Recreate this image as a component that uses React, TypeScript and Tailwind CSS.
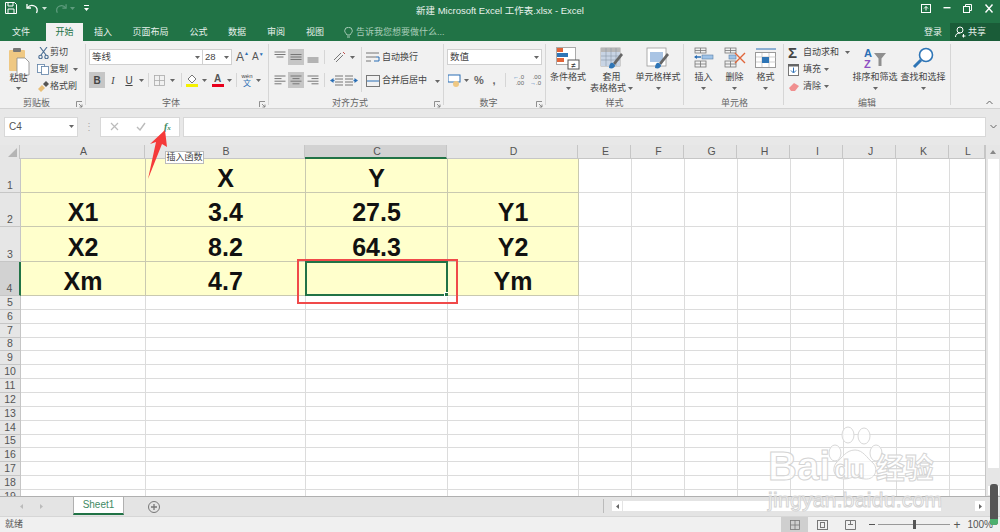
import { FC, ReactNode } from 'react';

const Caret: FC<{ color?: string }> = ({ color = '#666' }) => (
  <svg width="5" height="3" viewBox="0 0 5 3" className="shrink-0"><polygon points="0,0 5,0 2.5,3" fill={color} /></svg>
);

const Launcher: FC = () => (
  <svg width="7" height="7" viewBox="0 0 7 7" fill="none" stroke="#777" strokeWidth="0.8">
    <path d="M0.5 6V0.5H6" /><path d="M3 3L6 6M6 3.5V6H3.5" />
  </svg>
);

const Sep: FC = () => <div className="w-px self-stretch my-[3px] bg-[#d6d6d6] shrink-0" />;

const Group: FC<{ className: string; label: string; launcher?: boolean; children: ReactNode }> = ({ className, label, launcher, children }) => (
  <div className={`flex flex-col shrink-0 pt-[3px] ${className}`}>
    <div className="h-[52px] flex">{children}</div>
    <div className="h-[13px] flex items-end text-[9px] leading-[9px] text-[#666]">
      <span className="flex-1 text-center">{label}</span>
      {launcher && <span className="w-[12px] flex justify-center"><Launcher /></span>}
    </div>
  </div>
);

const Cell: FC<{ className: string; children?: ReactNode }> = ({ className, children }) => (
  <div className={`flex items-center justify-center shrink-0 h-[16px] ${className}`}>{children}</div>
);

const Big: FC<{ className: string; icon: ReactNode; first: string; second?: string; secondCaret?: boolean }> = ({ className, icon, first, second, secondCaret }) => (
  <div className={`flex flex-col items-center shrink-0 text-[9px] text-[#444] leading-[11px] ${className}`}>
    <div className="h-[28px] pt-[3px] flex items-start justify-center">{icon}</div>
    <div className="h-[11px] whitespace-nowrap">{first}</div>
    <div className="h-[11px] flex items-center gap-[2px] whitespace-nowrap">
      {second && <span>{second}</span>}
      {(!second || secondCaret) && <Caret />}
    </div>
  </div>
);

const Lines: FC<{ rows: [number, number][] }> = ({ rows }) => (
  <svg width="12" height="12" viewBox="0 0 12 12" stroke="#777" strokeWidth="1">
    {rows.map(([y, w], i) => <line key={i} x1={(12 - w) / 2} x2={(12 + w) / 2} y1={y} y2={y} />)}
  </svg>
);

const LeftLines: FC<{ align: 'l' | 'c' | 'r' }> = ({ align }) => {
  const ws = [11, 7, 11, 7];
  return (
    <svg width="12" height="10" viewBox="0 0 12 10" stroke="#777" strokeWidth="1">
      {ws.map((w, i) => {
        const x = align === 'l' ? 0.5 : align === 'r' ? 11.5 - w : 6 - w / 2;
        return <line key={i} x1={x} x2={x + w} y1={1 + i * 2.6} y2={1 + i * 2.6} />;
      })}
    </svg>
  );
};

const Indent: FC<{ flip?: boolean }> = ({ flip }) => (
  <svg width="13" height="11" viewBox="0 0 13 11" className={flip ? '-scale-x-100' : ''}>
    <path d="M5 1h8M5 4h8M5 7h8M5 10h8" stroke="#777" strokeWidth="1" />
    <path d="M0 5.5L3.5 3v5z" fill="#2b6fb5" /><rect x="2.5" y="4.8" width="2" height="1.4" fill="#2b6fb5" />
  </svg>
);

const SmallGrid: FC<{ x: number; y: number; w?: number; h?: number; stroke?: string }> = ({ x, y, w = 14, h = 10, stroke = '#777' }) => (
  <g stroke={stroke} strokeWidth="0.8" fill="none">
    <rect x={x} y={y} width={w} height={h} />
    <line x1={x + w / 2} x2={x + w / 2} y1={y} y2={y + h} />
    <line x1={x} x2={x + w} y1={y + h / 2} y2={y + h / 2} />
  </g>
);

const TableBrushIcon: FC<{ single?: boolean }> = ({ single }) => (
  <svg width="24" height="23" viewBox="0 0 24 23">
    <rect x="1" y="1" width="19" height="18" fill="#fff" stroke="#999" strokeWidth="0.8" />
    {single ? (
      <rect x="4" y="5" width="13" height="10" fill="#a9c4e4" />
    ) : (
      <>
        <rect x="1" y="1" width="19" height="4" fill="#b7b7b7" />
        <rect x="1" y="5" width="19" height="14" fill="#c8d4e4" />
        <path d="M1 9h19M1 13h19M6 1v18M11 1v18M16 1v18" stroke="#8b98a8" strokeWidth="0.6" />
      </>
    )}
    <path d="M13 16L21 6l2 2-8 10z" fill="#666" />
    <path d="M9 21c0-4 2-6 4-5l2 2c0 3-3 4-6 3z" fill="#2e75b6" />
  </svg>
);

const Ribbon: FC = () => (
  <div className="h-[68px] bg-[#f1f1f1] border-b border-[#d2d2d2] flex shrink-0 text-[9px] text-[#444]">
    <Group className="w-[85px]" label="剪贴板" launcher>
      <div className="w-[36px] pl-[1px] flex flex-col items-center">
        <svg width="22" height="31" viewBox="0 0 22 31" className="mt-[3px]">
          <rect x="1" y="3" width="16" height="21" rx="1" fill="#efc883" />
          <rect x="5" y="1" width="8" height="4" rx="1" fill="#777" />
          <path d="M9 11h8l4 4v13H9z" fill="#fff" stroke="#888" strokeWidth="0.8" />
        </svg>
        <div className="-mt-[5px] h-[11px] leading-[11px]">粘贴</div>
        <div className="mt-[3px]"><Caret /></div>
      </div>
      <div className="flex flex-col text-[9px]">
        {[
          { t: '剪切', i: <svg width="11" height="12" viewBox="0 0 11 12" fill="none" stroke="#4a6d94" strokeWidth="1.1"><path d="M2 0l6 8M9 0L3 8" /><circle cx="2.5" cy="10" r="1.7" /><circle cx="8.5" cy="10" r="1.7" /></svg> },
          { t: '复制', i: <svg width="12" height="11" viewBox="0 0 12 11" fill="#fff" stroke="#5c7fa6" strokeWidth="0.8"><rect x="0.5" y="0.5" width="7" height="8" /><rect x="4.5" y="2.5" width="7" height="8" /></svg> },
          { t: '格式刷', i: <svg width="12" height="12" viewBox="0 0 12 12"><path d="M1 8l4-4 3 3-4 4z" fill="#e9bf78" /><path d="M6 3l3-3 3 3-3 3z" fill="#555" /></svg> },
        ].map((r, i) => (
          <div key={r.t} className="h-[17px] flex items-center w-[49px]">
            <span className="w-[14px] flex justify-center">{r.i}</span>
            <span>{r.t}</span>
            {i === 1 && <span className="ml-[5px]"><Caret /></span>}
          </div>
        ))}
      </div>
    </Group>
    <Sep />
    <Group className="w-[182px]" label="字体" launcher>
      <div className="pl-[3px] pt-[5px] flex flex-col gap-[7px]">
        <div className="flex items-center h-[16px]">
          <div className="w-[114px] h-[16px] bg-white border border-[#d0d0d0] flex items-center justify-between px-[2px]">
            <span className="text-[9.5px]">等线</span><Caret />
          </div>
          <div className="w-[29px] h-[16px] bg-white border border-[#d0d0d0] border-l-0 flex items-center justify-between px-[2px]">
            <span className="text-[9.5px]">28</span><Caret />
          </div>
          <div className="ml-[4px] w-[15px] flex items-start text-[12px] leading-none text-[#555]">A<span className="text-[#2b6fb5] text-[5px]">▲</span></div>
          <div className="ml-[1px] w-[14px] flex items-start text-[10px] leading-none text-[#555]">A<span className="text-[#2b6fb5] text-[5px]">▼</span></div>
        </div>
        <div className="flex items-center h-[16px]">
          <Cell className="w-[16px] bg-[#c6c6c6] font-bold text-[10px]">B</Cell>
          <Cell className="w-[16px] italic text-[10px] [font-family:'Liberation_Serif',serif]">I</Cell>
          <Cell className="w-[16px] underline text-[10px]">U</Cell>
          <Cell className="w-[8px]"><Caret /></Cell>
          <div className="w-px h-[14px] mx-[3px] bg-[#d6d6d6]" />
          <Cell className="w-[14px]"><svg width="11" height="11"><SmallGrid x={0.5} y={0.5} w={10} h={10} stroke="#aaa" /></svg></Cell>
          <Cell className="w-[13px]"><Caret /></Cell>
          <div className="w-px h-[14px] mx-[2px] bg-[#d6d6d6]" />
          <Cell className="w-[16px]">
            <svg width="12" height="14" viewBox="0 0 12 14"><path d="M2 6l4-4 4 4-4 4z" fill="#fff" stroke="#777" /><rect y="11" width="12" height="3" fill="#f5f100" /></svg>
          </Cell>
          <Cell className="w-[8px]"><Caret /></Cell>
          <Cell className="w-[17px] ml-[1px]">
            <div className="flex flex-col items-center leading-none text-[10px] font-bold text-[#555]">A<div className="w-[12px] h-[3px] bg-[#e8001c]" /></div>
          </Cell>
          <Cell className="w-[7px]"><Caret /></Cell>
          <div className="w-px h-[14px] mx-[3px] bg-[#d6d6d6]" />
          <Cell className="w-[14px]">
            <div className="flex flex-col items-center leading-[7px] text-[6px]"><span>wén</span><span className="text-[#2b6fb5] text-[8px]">文</span></div>
          </Cell>
          <Cell className="w-[8px]"><Caret /></Cell>
        </div>
      </div>
    </Group>
    <Sep />
    <Group className="w-[174px]" label="对齐方式" launcher>
      <div className="w-[92px] pl-[2px] pt-[5px] flex flex-col gap-[7px]">
        <div className="flex items-center h-[16px]">
          <Cell className="w-[17px]"><Lines rows={[[1, 11], [3.5, 11], [6, 7]]} /></Cell>
          <Cell className="w-[16px] bg-[#c6c6c6]"><Lines rows={[[3.5, 11], [6, 11], [8.5, 11]]} /></Cell>
          <Cell className="w-[17px]"><Lines rows={[[7, 11], [9, 11], [11, 11]]} /></Cell>
          <div className="w-px h-[14px] mx-[3px] bg-[#d6d6d6]" />
          <Cell className="w-[22px]"><svg width="13" height="12" viewBox="0 0 13 12" fill="none" stroke="#777"><path d="M1 9L8 2M3 11l7-7" /><path d="M10 1l2 2" stroke="#c0504d" /></svg></Cell>
          <Cell className="w-[5px]"><Caret /></Cell>
        </div>
        <div className="flex items-center h-[16px]">
          <Cell className="w-[17px]"><LeftLines align="l" /></Cell>
          <Cell className="w-[16px] bg-[#c6c6c6]"><LeftLines align="c" /></Cell>
          <Cell className="w-[17px]"><LeftLines align="r" /></Cell>
          <div className="w-px h-[14px] mx-[3px] bg-[#d6d6d6]" />
          <Cell className="w-[16px]"><Indent /></Cell>
          <Cell className="w-[14px]"><Indent flip /></Cell>
        </div>
      </div>
      <div className="w-px my-[3px] bg-[#d6d6d6]" />
      <div className="pl-[4px] pt-[6px] flex flex-col gap-[7px]">
        <div className="h-[16px] flex items-center gap-[2px]">
          <svg width="14" height="12" viewBox="0 0 14 12" fill="none" stroke="#777"><path d="M0 1h13M0 5h10M0 9h5" /><path d="M10 5h3v4H8" stroke="#2b6fb5" /></svg>
          <span>自动换行</span>
        </div>
        <div className="h-[16px] flex items-center gap-[2px]">
          <svg width="14" height="12" viewBox="0 0 14 12" fill="none" stroke="#777"><rect x="0.5" y="0.5" width="13" height="11" /><path d="M1 6h12" stroke="#2b6fb5" /></svg>
          <span>合并后居中</span>
          <span className="ml-[6px]"><Caret /></span>
        </div>
      </div>
    </Group>
    <Sep />
    <Group className="w-[101px]" label="数字" launcher>
      <div className="pl-[3px] pt-[5px] flex flex-col gap-[7px]">
        <div className="w-[95px] h-[16px] bg-white border border-[#d0d0d0] flex items-center justify-between px-[2px]">
          <span className="text-[9.5px]">数值</span><Caret />
        </div>
        <div className="flex items-center h-[16px]">
          <Cell className="w-[15px]">
            <svg width="13" height="13" viewBox="0 0 13 13"><rect y="1" width="12" height="7" fill="#fff" stroke="#2b6fb5" /><circle cx="8" cy="10" r="3" fill="#efc883" /></svg>
          </Cell>
          <Cell className="w-[9px]"><Caret /></Cell>
          <Cell className="w-[16px] text-[11px] font-bold text-[#666]">%</Cell>
          <Cell className="w-[14px] text-[11px] font-bold text-[#666]">,</Cell>
          <div className="w-px h-[14px] mx-[4px] bg-[#d6d6d6]" />
          <Cell className="w-[17px]">
            <div className="text-[6px] leading-[6px] text-[#666] flex flex-col items-end"><span><span className="text-[#2b6fb5]">←</span>.0</span><span>.00</span></div>
          </Cell>
          <Cell className="w-[17px]">
            <div className="text-[6px] leading-[6px] text-[#666] flex flex-col items-end"><span>.00</span><span><span className="text-[#2b6fb5]">→</span>.0</span></div>
          </Cell>
        </div>
      </div>
    </Group>
    <Sep />
    <Group className="w-[137px]" label="样式">
      <Big className="w-[44px]" first="条件格式" icon={
        <svg width="24" height="23" viewBox="0 0 24 23">
          <rect x="0.5" y="0.5" width="19" height="17" fill="#fff" stroke="#aaa" />
          <rect x="1" y="1" width="6" height="4" fill="#e0653a" /><rect x="1" y="6" width="11" height="4" fill="#2e75b6" /><rect x="1" y="11" width="7" height="4" fill="#e0653a" />
          <rect x="12" y="13" width="11" height="9" fill="#fff" stroke="#555" />
          <text x="17.5" y="21" fontSize="8" textAnchor="middle" fill="#333">≠</text>
        </svg>
      } />
      <Big className="w-[43px]" first="套用" second="表格格式" secondCaret icon={<TableBrushIcon />} />
      <Big className="w-[50px]" first="单元格样式" icon={<TableBrushIcon single />} />
    </Group>
    <Sep />
    <Group className="w-[99px] pl-[4px] pr-[2px]" label="单元格">
      <Big className="w-[31px]" first="插入" icon={
        <svg width="20" height="21" viewBox="0 0 20 21"><SmallGrid x={1} y={1} w={11} h={5} /><path d="M1 10h6" stroke="#2b6fb5" strokeWidth="1.5" /><path d="M0 10l3-2v4z" fill="#2b6fb5" /><rect x="8" y="8" width="11" height="4" fill="#9fc3e8" stroke="#5c7fa6" strokeWidth="0.6" /><SmallGrid x={1} y={14} w={11} h={6} /></svg>
      } />
      <Big className="w-[31px]" first="删除" icon={
        <svg width="22" height="21" viewBox="0 0 22 21"><SmallGrid x={1} y={1} w={11} h={5} /><rect x="5" y="8" width="7" height="4" fill="#9fc3e8" stroke="#5c7fa6" strokeWidth="0.6" /><SmallGrid x={1} y={14} w={11} h={6} /><path d="M11 6l10 10M21 6L11 16" stroke="#e0653a" strokeWidth="1.4" /></svg>
      } />
      <Big className="w-[31px]" first="格式" icon={
        <svg width="22" height="22" viewBox="0 0 22 22"><path d="M1 2h20" stroke="#2b6fb5" /><rect x="0.5" y="5.5" width="20" height="15" fill="#fff" stroke="#999" /><path d="M7 6v14M14 6v14M1 10h20M1 15h20" stroke="#bbb" strokeWidth="0.7" /><rect x="7" y="10" width="7" height="6" fill="#2e75b6" /></svg>
      } />
    </Group>
    <Sep />
    <Group className="w-[166px]" label="编辑">
      <div className="w-[67px] pl-[4px] flex flex-col">
        <div className="h-[17px] flex items-center">
          <span className="w-[15px] text-[15px] leading-none text-[#444] font-bold">Σ</span><span>自动求和</span><span className="ml-[6px]"><Caret /></span>
        </div>
        <div className="h-[17px] flex items-center">
          <span className="w-[15px]"><svg width="11" height="12" viewBox="0 0 11 12"><rect x="0.5" y="0.5" width="10" height="11" fill="#fff" stroke="#777" /><rect width="11" height="2.5" fill="#666" /><path d="M5.5 3.5v5M3 6.5l2.5 2.5L8 6.5" stroke="#2b6fb5" fill="none" /></svg></span><span>填充</span><span className="ml-[3px]"><Caret /></span>
        </div>
        <div className="h-[17px] flex items-center">
          <span className="w-[15px]"><svg width="12" height="10" viewBox="0 0 12 10"><path d="M1 6l5-5 5 3-4 5H3z" fill="#f08f8f" /></svg></span><span>清除</span><span className="ml-[3px]"><Caret /></span>
        </div>
      </div>
      <Big className="w-[48px]" first="排序和筛选" icon={
        <svg width="24" height="22" viewBox="0 0 24 22">
          <text x="1" y="10" fontSize="11" fontWeight="bold" fill="#2b6fb5">A</text>
          <text x="1" y="21" fontSize="11" fontWeight="bold" fill="#8e4fc2">Z</text>
          <path d="M11 6h12l-4.5 5.5V19h-3v-7.5z" fill="#8f8f8f" />
        </svg>
      } />
      <Big className="w-[48px]" first="查找和选择" icon={
        <svg width="23" height="22" viewBox="0 0 23 22" fill="none"><circle cx="14" cy="8" r="6.5" stroke="#2e75b6" strokeWidth="1.6" fill="#fff" /><path d="M9 13l-7 7" stroke="#2e75b6" strokeWidth="3" /></svg>
      } />
    </Group>
    <Sep />
    <div className="flex-1 flex justify-end items-end pr-[7px] pb-[3px]">
      <svg width="7" height="5" viewBox="0 0 7 5" fill="none" stroke="#666"><path d="M0.5 4L3.5 1l3 3" /></svg>
    </div>
  </div>
);

const tabs: { label: string; className: string }[] = [
  { label: '插入', className: 'w-[40px]' },
  { label: '页面布局', className: 'w-[55px]' },
  { label: '公式', className: 'w-[41px]' },
  { label: '数据', className: 'w-[36px]' },
  { label: '审阅', className: 'w-[42px]' },
  { label: '视图', className: 'w-[36px]' },
];

const TitleBar: FC = () => (
  <div className="h-[41px] bg-[#217346] flex flex-col shrink-0 text-white">
    <div className="h-[23px] grid grid-cols-[1fr_auto_1fr] items-center">
      <div className="flex items-center pl-[5px] -mt-[7px]">
        <svg width="12" height="12" viewBox="0 0 12 12" fill="none" stroke="#fff"><path d="M0.5 0.5h9l2 2v9H0.5z" /><path d="M3 1v3h5V1M3 11V7h6v4" /></svg>
        <svg width="13" height="11" viewBox="0 0 13 11" fill="none" stroke="#fff" strokeWidth="1.3" className="ml-[9px]"><path d="M1 1v4h4" /><path d="M1.5 5C3 2.5 6 2 8.5 3s3.5 4 2 7" /></svg>
        <span className="ml-[3px]"><Caret color="#cfe3d8" /></span>
        <svg width="12" height="11" viewBox="0 0 13 11" fill="none" stroke="#5f9c7e" strokeWidth="1.3" className="ml-[8px] -scale-x-100"><path d="M1 1v4h4" /><path d="M1.5 5C3 2.5 6 2 8.5 3s3.5 4 2 7" /></svg>
        <span className="ml-[3px]"><Caret color="#5f9c7e" /></span>
        <svg width="5" height="6" viewBox="0 0 5 6" className="ml-[9px]"><path d="M0 0h5v1H0z" fill="#fff" /><polygon points="0,3 5,3 2.5,6" fill="#fff" /></svg>
      </div>
      <div className="text-[9.5px] whitespace-nowrap -mt-[1px] text-[#e8f1ec]">新建 Microsoft Excel 工作表.xlsx - Excel</div>
      <div className="flex justify-end items-center -mt-[7px] pr-[6px] gap-[11px]">
        <svg width="10" height="9" viewBox="0 0 10 9" fill="none" stroke="#fff"><rect x="0.5" y="0.5" width="9" height="8" /><path d="M5 2.5v4M3 4.5l2-2 2 2" /></svg>
        <svg width="10" height="2" viewBox="0 0 10 2"><rect width="7" height="1.4" x="1.5" fill="#fff" /></svg>
        <svg width="10" height="9" viewBox="0 0 10 9" fill="none" stroke="#fff"><rect x="0.5" y="2.5" width="6" height="6" /><path d="M2.5 2.5v-2h6v6H6.500" /></svg>
        <svg width="10" height="9" viewBox="0 0 10 9" fill="none" stroke="#fff" strokeWidth="1.4"><path d="M1.5 0.500l7 8M8.500 0.500l-7 8" /></svg>
      </div>
    </div>
    <div className="h-[18px] flex items-stretch text-[9px] text-[#e8f1ec] leading-[18px] text-center">
      <div className="w-[42px]">文件</div>
      <div className="w-[37px] ml-[4px] bg-[#f1f1f1] text-[#217346]">开始</div>
      {tabs.map(t => <div key={t.label} className={t.className}>{t.label}</div>)}
      <div className="ml-[11px] flex items-center gap-[3px] text-[#a9cdb9]">
        <svg width="9" height="11" viewBox="0 0 9 11" fill="none" stroke="#a9cdb9"><path d="M3 8C2 6 0.700 5.500 0.700 3.700a3.800 3.400 0 017.600 0C8.300 5.500 7 6 6 8z" /><path d="M3 10h3" /></svg>
        <span>告诉我您想要做什么...</span>
      </div>
      <div className="flex-1 flex justify-end items-center">
        <span className="mr-[8px]">登录</span>
        <div className="w-[50px] h-[18px] bg-[#1a5c38] flex items-center pl-[5px] gap-[2px]">
          <svg width="11" height="12" viewBox="0 0 11 12" fill="none" stroke="#fff"><circle cx="5" cy="4" r="3" /><path d="M0.500 11c0-2.500 1.500-4 4.500-4M8.500 8v3.500M7 10h3.500" /></svg>
          <span>共享</span>
        </div>
      </div>
    </div>
  </div>
);

const FormulaBar: FC = () => (
  <div className="h-[36px] bg-[#e8e8e8] shrink-0 flex items-center pl-[4px] pb-[1px] text-[10px] text-[#555]">
    <div className="w-[74px] h-[20px] bg-white border border-[#d8d8d8] flex items-center justify-between pl-[4px] pr-[3px]">
      <span>C4</span><Caret />
    </div>
    <div className="w-[22px] flex justify-center text-[#aaa] text-[10px]">⋮</div>
    <div className="w-[80px] h-[20px] bg-white border border-[#d8d8d8] flex items-center pl-[9px]">
      <svg width="9" height="9" viewBox="0 0 9 9" stroke="#bbb" strokeWidth="1.2"><path d="M1 1l7 7M8 1L1 8" /></svg>
      <svg width="10" height="9" viewBox="0 0 10 9" stroke="#bbb" strokeWidth="1.4" fill="none" className="ml-[17px]"><path d="M1 5l3 3 5-7" /></svg>
      <span className="ml-[18px] italic font-bold text-[10px] text-[#3b8a60] [font-family:'Liberation_Serif',serif]">f<span className="text-[7px]">x</span></span>
    </div>
    <div className="ml-[3px] w-[803px] h-[20px] bg-white border border-[#d8d8d8]" />
    <div className="flex-1 flex justify-center"><svg width="7" height="5" viewBox="0 0 7 5" fill="none" stroke="#666"><path d="M0.500 1l3 3 3-3" /></svg></div>
  </div>
);

const colHeaders: { label: string; className: string }[] = [
  { label: 'A', className: 'w-[125px]' },
  { label: 'B', className: 'w-[160px]' },
  { label: 'C', className: 'w-[142px]' },
  { label: 'D', className: 'w-[131px]' },
  { label: 'E', className: 'w-[53px]' },
  { label: 'F', className: 'w-[53px]' },
  { label: 'G', className: 'w-[53px]' },
  { label: 'H', className: 'w-[53px]' },
  { label: 'I', className: 'w-[53px]' },
  { label: 'J', className: 'w-[53px]' },
  { label: 'K', className: 'w-[53px]' },
  { label: 'L', className: 'w-[36px]' },
];

const dataRows: { n: number; h: string; cells: string[] }[] = [
  { n: 1, h: 'h-[34px]', cells: ['', 'X', 'Y', ''] },
  { n: 2, h: 'h-[34px]', cells: ['X1', '3.4', '27.5', 'Y1'] },
  { n: 3, h: 'h-[35px]', cells: ['X2', '8.2', '64.3', 'Y2'] },
  { n: 4, h: 'h-[34px]', cells: ['Xm', '4.7', '', 'Ym'] },
];

const emptyRows = Array.from({ length: 15 }, (_, i) => i + 5);

const RowNum: FC<{ n: number; className: string }> = ({ n, className }) => (
  <div className={`w-[21px] shrink-0 flex items-end justify-center text-[10.5px] leading-[13px] text-[#555] border-r border-b ${n === 4 ? 'bg-[#d2d2d2] border-r-2 border-r-[#217346] border-b-[#c6c6c6]' : 'bg-[#e6e6e6] border-[#c6c6c6]'} ${className}`}>{n}</div>
);

const Sheet: FC = () => (
  <div className="h-[351px] flex shrink-0 overflow-hidden bg-white relative">
    <div className="w-[985px] shrink-0 flex flex-col">
      <div className="h-[14px] flex bg-[#e6e6e6] text-[10.5px] text-[#555] shrink-0">
        <div className="w-[21px] border-r border-[#c6c6c6] flex items-end justify-end pr-[2px] pb-[2px]">
          <svg width="9" height="9" viewBox="0 0 9 9"><polygon points="9,0 9,9 0,9" fill="#b5b5b5" /></svg>
        </div>
        {colHeaders.map(c => (
          <div key={c.label} className={`${c.className} shrink-0 text-center pl-[3px] leading-[13px] border-r border-[#c6c6c6] ${c.label === 'C' ? 'bg-[#d2d2d2] border-b-2 border-b-[#217346]' : 'border-b border-b-[#c6c6c6]'}`}>{c.label}</div>
        ))}
      </div>
      {dataRows.map(r => (
        <div key={r.n} className={`${r.h} flex shrink-0`}>
          <RowNum n={r.n} className={r.h} />
          {r.cells.map((c, i) => {
            const selected = r.n === 4 && i === 2;
            return (
              <div key={i} className={`${colHeaders[i].className} shrink-0 bg-[#ffffcc] border-r border-b border-[#c9c9b0] flex items-end justify-center text-[25px] leading-[28px] font-bold text-[#111] relative`}>
                {c}
                {selected && (
                  <div className="absolute -left-px -top-px -right-px -bottom-px border-2 border-[#217346]">
                    <div className="absolute -right-[3px] -bottom-[3px] w-[5px] h-[5px] bg-[#217346] border border-white" />
                  </div>
                )}
              </div>
            );
          })}
          {colHeaders.slice(4).map(c => <div key={c.label} className={`${c.className} shrink-0 border-r border-b border-[#dcdcdc]`} />)}
        </div>
      ))}
      {emptyRows.map(n => (
        <div key={n} className="h-[13.86px] flex shrink-0">
          <RowNum n={n} className="h-[13.86px]" />
          {colHeaders.map(c => <div key={c.label} className={`${c.className} shrink-0 border-r border-b border-[#dcdcdc]`} />)}
        </div>
      ))}
    </div>
    <div className="flex-1 bg-[#e6e6e6] flex flex-col items-center border-l border-[#c6c6c6]">
      <div className="h-[14px] w-full flex items-center justify-center"><svg width="6" height="4"><polygon points="0,4 6,4 3,0" fill="#888" /></svg></div>
      <div className="w-[11px] h-[309px] bg-white" />
      <div className="flex-1" />
      <div className="w-[11px] h-[9px] bg-white flex items-center justify-center mb-[1px]"><Caret /></div>
    </div>
  </div>
);

const SheetTabs: FC = () => (
  <div className="h-[20px] bg-[#e4e4e4] border-t border-[#b0b0b0] flex shrink-0 text-[10px]">
    <div className="w-[73px] flex items-center pl-[20px] gap-[17px]">
      <svg width="3" height="5"><polygon points="3,0 3,5 0,2.500" fill="#bbb" /></svg>
      <svg width="3" height="5"><polygon points="0,0 0,5 3,2.500" fill="#bbb" /></svg>
    </div>
    <div className="w-[51px] h-[18px] bg-white border-x border-[#b0b0b0] border-b-2 border-b-[#217346] text-[#3f8a63] text-center leading-[16px]">Sheet1</div>
    <div className="w-[59px] flex items-center justify-center">
      <svg width="12" height="12" viewBox="0 0 12 12" fill="none" stroke="#777"><circle cx="6" cy="6" r="5.500" /><path d="M3 6h6M6 3v6" strokeWidth="1.300" /></svg>
    </div>
    <div className="flex-1" />
    <div className="w-px h-[14px] mt-[2px] bg-[#bbb] mr-[8px]" />
    <div className="w-[373px] h-[16px] flex items-center mt-[1px]">
      <div className="w-[10px] h-[10px] bg-white flex items-center justify-center"><svg width="3" height="5"><polygon points="3,0 3,5 0,2.500" fill="#666" /></svg></div>
      <div className="ml-[1px] w-[318px] h-[10px] bg-white" />
      <div className="flex-1" />
      <div className="w-[10px] h-[10px] bg-white flex items-center justify-center"><svg width="3" height="5"><polygon points="0,0 0,5 3,2.500" fill="#666" /></svg></div>
    </div>
    <div className="w-[15px]" />
  </div>
);

const StatusBar: FC = () => (
  <div className="h-[16px] bg-[#f0f0f0] flex items-center shrink-0 text-[9px] text-[#555] border-t border-[#d6d6d6]">
    <span className="ml-[5px]">就绪</span>
    <div className="flex-1" />
    <div className="w-[27px] h-[16px] bg-[#cfcfcf] flex items-center justify-center">
      <svg width="10" height="10"><SmallGrid x={0.5} y={0.5} w={9} h={9} /></svg>
    </div>
    <div className="w-[28px] flex justify-center"><svg width="11" height="10" fill="none" stroke="#777"><rect x="0.500" y="0.500" width="10" height="9" /><rect x="3.500" y="2.500" width="4" height="5" /></svg></div>
    <div className="w-[28px] flex justify-center"><svg width="11" height="10" fill="none" stroke="#777"><path d="M0.500 0.500h10v9h-10zM5.500 0.500v4M3 4.500h5" /></svg></div>
    <div className="ml-[5px] w-[6px] h-px bg-[#555]" />
    <div className="ml-[3px] w-[72px] h-px bg-[#999] relative">
      <div className="absolute left-[35px] -top-[4px] w-[3px] h-[9px] bg-[#555]" />
    </div>
    <span className="ml-[3px] text-[12px] leading-none">+</span>
    <span className="ml-[7px] mr-[7px] text-[10px]">100%</span>
  </div>
);

const Overlays: FC = () => (
  <>
    <svg width="30" height="56" viewBox="0 0 30 56" className="absolute left-[143px] top-[127px]">
      <polygon points="22,3 24,20 19,17 5,52 13,15 7,17" fill="#f53a3a" />
    </svg>
    <div className="absolute left-[165px] top-[151px] w-[39px] h-[13px] bg-white border border-[#bbb] text-[9px] leading-[11px] text-center text-[#444] whitespace-nowrap">插入函数</div>
    <div className="absolute left-[297px] top-[259px] w-[161px] h-[45px] border-2 border-[#f04a4a]" />
    <div className="absolute left-[768px] top-[422px] w-[180px] h-[92px] pointer-events-none select-none text-white/70 [-webkit-text-stroke:1px_#d4d4d4]">
      <svg width="66" height="60" viewBox="0 0 66 60" fill="#fff" fillOpacity="0.7" stroke="#d8d8d8" className="absolute left-[54px] top-[4px]">
        <ellipse cx="13" cy="27" rx="6" ry="8" /><ellipse cx="26" cy="9" rx="6" ry="8" /><ellipse cx="42" cy="10" rx="6" ry="8" /><ellipse cx="54" cy="27" rx="6" ry="8" />
        <path d="M33 24c8 0 12 8 18 13 6 6 2 17-8 16-4 0-7-2-10-2s-6 2-11 2c-9 0-13-9-8-16 6-5 10-13 19-13z" />
      </svg>
      <div className="absolute left-0 top-[22px] flex items-end text-[40px] leading-[44px] font-bold whitespace-nowrap">
        <span>Bai</span><span className="text-[25px] ml-[4px] leading-[38px]">du</span><span className="text-[29px] ml-[11px] [font-family:'Noto_Sans_CJK_SC',sans-serif]">经验</span>
      </div>
      <div className="absolute left-0 top-[66px] text-[21px] leading-[24px] tracking-[0.3px] whitespace-nowrap">jingyan.baidu.com</div>
    </div>
    <div className="absolute left-[990px] top-[484px] w-[8px] h-[41px] rounded-[3px] bg-[#555] overflow-hidden flex flex-col justify-end">
      <div className="h-[6px] bg-[#4caf6e]" />
    </div>
  </>
);

export default function App() {
  return (
    <div className="relative w-[1000px] h-[532px] overflow-hidden flex flex-col bg-white [font-family:'Liberation_Sans','Noto_Sans_CJK_SC',sans-serif]">
      <TitleBar />
      <Ribbon />
      <FormulaBar />
      <Sheet />
      <SheetTabs />
      <StatusBar />
      <Overlays />
    </div>
  );
}
